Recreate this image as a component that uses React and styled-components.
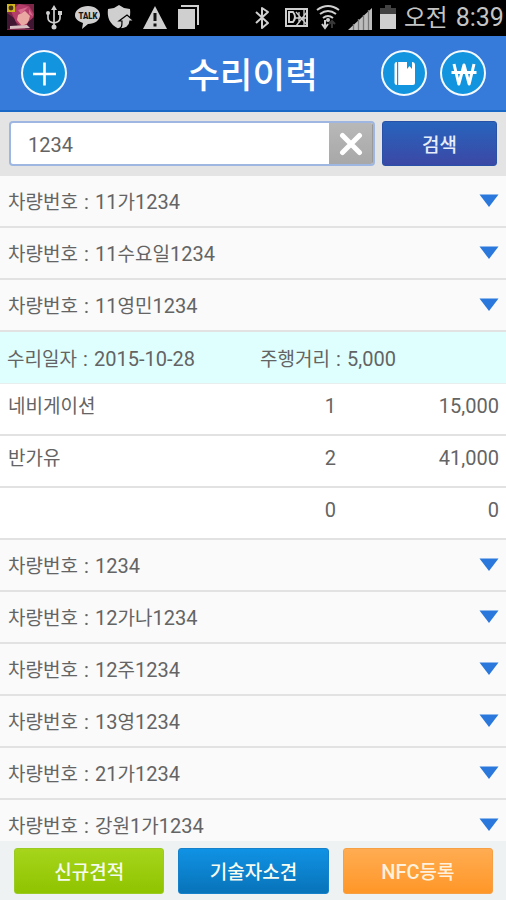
import React from 'react';
import styled, { createGlobalStyle } from 'styled-components';

const GlobalStyle = createGlobalStyle`
  * { box-sizing: border-box; }
  html, body { margin: 0; padding: 0; background: #fff; overflow: hidden; }
  svg { display: block; flex: none; }
`;

const Screen = styled.div`
  width: 506px;
  height: 900px;
  display: flex;
  flex-direction: column;
  overflow: hidden;
  background: #fff;
  color: #646464;
  font: 400 20px/26px Roboto, 'Noto Sans CJK KR', sans-serif;
`;

const Hangul = styled.span`
  font-family: 'Noto Sans CJK KR', sans-serif;
  font-size: 0.95em;
  line-height: 1;
`;

const Text = ({ children }) =>
  children
    .split(/([가-힣]+)/)
    .filter(Boolean)
    .map((run, i) => (/[가-힣]/.test(run) ? <Hangul key={i}>{run}</Hangul> : run));

const StatusBar = styled.div`
  height: 36px;
  flex: none;
  display: flex;
  align-items: center;
  background: #000;
  color: #c4c4c4;
`;

const StatusIcons = styled.svg`
  width: 404px;
  height: 36px;
`;

const Clock = styled.div`
  display: flex;
  gap: 8px;
  white-space: nowrap;
  font-size: 25px;
  line-height: 36px;
`;

const Header = styled.header`
  height: 76px;
  flex: none;
  display: grid;
  grid-template-columns: 105px 1fr 105px;
  align-items: center;
  padding: 0 20px 0 21px;
  background: #377bda;
  border-bottom: 2px solid #1a69c6;
`;

const Title = styled.h1`
  margin: 0 2px 0 0;
  text-align: center;
  color: #fff;
  font: 500 35.5px/40px 'Noto Sans CJK KR', sans-serif;
`;

const Actions = styled.div`
  display: flex;
  gap: 13px;
`;

const RoundButton = styled.button`
  width: 46px;
  height: 46px;
  padding: 0;
  display: grid;
  place-items: center;
  border: 2px solid #f4faff;
  border-radius: 50%;
  background: #1295de;
`;

const SearchBar = styled.div`
  height: 64px;
  flex: none;
  display: flex;
  gap: 7px;
  padding: 9px 9px 10px;
  background: #e3e4e3;
`;

const SearchField = styled.div`
  width: 366px;
  display: flex;
  overflow: hidden;
  border: 2px solid #9eb6e2;
  border-radius: 4px;
  background: #fff;
`;

const Query = styled.div`
  flex: 1;
  padding: 9px 0 0 17px;
  font-size: 20px;
  line-height: 26px;
`;

const ClearButton = styled.button`
  width: 44px;
  padding: 0;
  display: grid;
  place-items: center;
  border: 0;
  border-right: 1px solid #999;
  background: linear-gradient(#b8b8b8, #a8a8a8);
`;

const SearchButton = styled.button`
  width: 115px;
  height: 45px;
  padding: 0;
  border: 1px solid #2a51a8;
  border-radius: 3px;
  background: linear-gradient(#2864bd, #3b48a5);
  color: #e6edfb;
  font: 500 19px/26px 'Noto Sans CJK KR', sans-serif;
`;

const List = styled.main`
  height: 665px;
  flex: none;
  overflow: hidden;
  word-spacing: 1.2px;
`;

const VehicleRow = styled.div`
  height: 52px;
  display: flex;
  justify-content: space-between;
  padding: 13px 7px 0 8px;
  background: #fafafa;
  border-bottom: 2px solid #e2e2e2;
`;

const Arrow = styled.svg`
  width: 20px;
  height: 14px;
  margin-top: 5px;
`;

const VisitRow = styled.div`
  height: 52px;
  display: grid;
  grid-template-columns: 253px 1fr;
  padding: 14px 8px 0 7px;
  background: #dfffff;
  border-bottom: 1px solid #e8eeee;
`;

const PartRow = styled.div`
  height: 52px;
  display: grid;
  grid-template-columns: 1fr 60px 163px;
  padding: 9px 7px 0 8px;
  background: #fff;
  border-bottom: 2px solid #e2e2e2;
  text-align: right;
`;

const PartName = styled.span`
  text-align: left;
`;

const Footer = styled.footer`
  height: 59px;
  flex: none;
  display: flex;
  gap: 14px;
  padding: 7px 13px 0 14px;
  background: #eff2f2;
`;

const tones = {
  green: ['#a6d51b', '#8fc400', '#9acb25'],
  blue: ['#1092e4', '#0873b9', '#1581ca'],
  orange: ['#ffac52', '#ff9728', '#f5a044'],
};

const FooterButton = styled.button`
  width: 151px;
  height: 46px;
  padding: 1px 0 0;
  border: 1px solid ${(p) => tones[p.$tone][2]};
  border-radius: 3px;
  background: linear-gradient(${(p) => tones[p.$tone][0]}, ${(p) => tones[p.$tone][1]});
  color: ${(p) => (p.$tone === 'orange' ? '#fff1dc' : '#f6fbf0')};
  font: 500 20px/26px Roboto, 'Noto Sans CJK KR', sans-serif;
`;

const vehiclesBefore = ['11가1234', '11수요일1234', '11영민1234'];
const vehiclesAfter = ['1234', '12가나1234', '12주1234', '13영1234', '21가1234', '강원1가1234'];
const parts = [
  ['네비게이션', '1', '15,000'],
  ['반가유', '2', '41,000'],
  ['', '0', '0'],
];

const Vehicle = ({ number }) => (
  <VehicleRow>
    <span><Text>{`차량번호 : ${number}`}</Text></span>
    <Arrow viewBox="0 0 20 14"><path d="M.5.5h19L10 13z" fill="#2a78dc" /></Arrow>
  </VehicleRow>
);

const StatusGlyphs = () => (
  <StatusIcons viewBox="0 0 404 36" fill="none" stroke="#cfcfcf">
    <g stroke="none">
      <rect x="7" y="4" width="27" height="26" fill="#7d2748" />
      <path d="M11 11l8-7 10 2 5 8-3 9-8 5-8-7z" fill="#b43c69" />
      <path d="M18 15l7-4 5 5-2 7-6 3-5-6z" fill="#e9a8a2" />
      <path d="M7 13l7 5 4 9-11 2zM28 22l6-5v12h-9z" fill="#401633" />
      <path d="M18 10l10-3-7 7zM29 9l4 7-4-2z" fill="#d76b8e" />
      <rect x="7" y="4" width="8" height="8" fill="#d0b521" />
      <circle cx="11" cy="8" r="2.4" fill="#493213" />
      <path d="M10 26l17-1 3 3-20 1z" fill="#d7bec1" />
    </g>
    <g strokeWidth="1.7">
      <path d="M54 8v18M54 23q-6-1-6-5v-4M54 23q6-1 6-5v-5" />
      <g fill="#cfcfcf" stroke="none">
        <path d="M54 5l3 5h-6z" /><circle cx="48" cy="13" r="2" /><rect x="58" y="11" width="4" height="4" /><circle cx="54" cy="27" r="2.5" />
      </g>
    </g>
    <path d="M88 6c7 0 12 4 12 9s-5 9-12 9l-6 5 1-6c-5-2-8-4-8-8 0-5 6-9 13-9z" fill="#cfcfcf" stroke="none" />
    <text x="88" y="18.5" textAnchor="middle" textLength="19" lengthAdjust="spacingAndGlyphs" fill="#161616" stroke="none" fontFamily="Roboto, sans-serif" fontWeight="900" fontSize="8.5">TALK</text>
    <path d="M119 5l5 3 6 1c1 8-1 15-11 20-10-5-12-12-11-20l6-1z" fill="#cfcfcf" stroke="none" />
    <path d="M118 29c4-1 4-3 4-8h-3l8-6 7 6h-4c0 5-4 8-12 8z" fill="#cfcfcf" stroke="#000" strokeWidth="1.2" />
    <path d="M155 6l12 23h-24z" fill="#cfcfcf" stroke="none" />
    <path d="M155 13v8M155 23.500v3" stroke="#111" strokeWidth="3" />
    <path d="M178 9h17v20h-17z" fill="#cfcfcf" stroke="none" />
    <path d="M181 6h17v19" strokeWidth="2" />
    <path d="M256 12l12 11-6 5V8l6 4-12 11" strokeWidth="2" strokeLinejoin="round" />
    <rect x="286" y="9" width="21" height="17" strokeWidth="2" />
    <path d="M289 12h4q4 5 0 10h-4z" strokeWidth="2" />
    <path d="M296 12l11 13M307 12l-11 14M299 12v11M304 10v17M295 18h13" strokeWidth="1.3" />
    <path d="M317 10q11-8 22 0M320 14q8-6 16 0M323 18q5-4 10 0" strokeWidth="2" />
    <circle cx="328" cy="20" r="2" fill="#cfcfcf" stroke="none" />
    <path d="M325 20v7m-3-3 3 4 3-4" strokeWidth="2" />
    <path d="M332 28v-6m-3 2 3-3 3 3" stroke="#383838" strokeWidth="2" />
    <path d="M348 30l24-22v22z" fill="#bdbdbd" stroke="none" />
    <path d="M353.500 24v6M358.500 19v11M363.500 15v15M368.500 10v20" stroke="#777" strokeWidth="1.300" />
    <path d="M380 8h5V5h6v3h5v7h-16z" fill="#424242" stroke="none" />
    <path d="M380 14h16v15h-16z" fill="#cfcfcf" stroke="none" />
  </StatusIcons>
);

export default function App() {
  return (
    <Screen>
      <GlobalStyle />
      <StatusBar>
        <StatusGlyphs />
        <Clock><span><Text>오전</Text></span><span>8:39</span></Clock>
      </StatusBar>
      <Header>
        <RoundButton aria-label="추가">
          <svg width="42" height="42" viewBox="0 0 42 42"><path d="M10 22h23M21.500 10.500v23" stroke="#fff" strokeWidth="2.6" /></svg>
        </RoundButton>
        <Title>수리이력</Title>
        <Actions>
          <RoundButton aria-label="장부">
            <svg width="42" height="42" viewBox="0 0 42 42"><path d="M11.500 12q0-2 2.500-2v23q-2.500 0-2.500-2zM15.200 10H24v7l2.500-3 2.500 3v-7q3 0 3 3v18q0 2-2 2H15.200z" fill="#fff" /></svg>
          </RoundButton>
          <RoundButton aria-label="금액">
            <svg width="42" height="42" viewBox="0 0 42 42"><path d="M12 12l4.800 20 5.200-19 5.200 19 4.800-20M9.500 20.500h25" stroke="#fff" strokeWidth="3" fill="none" strokeLinejoin="round" /></svg>
          </RoundButton>
        </Actions>
      </Header>
      <SearchBar>
        <SearchField>
          <Query>1234</Query>
          <ClearButton aria-label="지우기">
            <svg width="24" height="24" viewBox="0 0 24 24"><path d="M3.500 3.500l17 17m0-17l-17 17" stroke="#fff" strokeWidth="5" strokeLinecap="round" /></svg>
          </ClearButton>
        </SearchField>
        <SearchButton>검색</SearchButton>
      </SearchBar>
      <List>
        {vehiclesBefore.map((n) => <Vehicle key={n} number={n} />)}
        <VisitRow>
          <span><Text>수리일자 : 2015-10-28</Text></span>
          <span><Text>주행거리 : 5,000</Text></span>
        </VisitRow>
        {parts.map(([name, count, price]) => (
          <PartRow key={price}>
            <PartName><Text>{name}</Text></PartName>
            <span>{count}</span>
            <span>{price}</span>
          </PartRow>
        ))}
        {vehiclesAfter.map((n) => <Vehicle key={n} number={n} />)}
      </List>
      <Footer>
        <FooterButton $tone="green"><Text>신규견적</Text></FooterButton>
        <FooterButton $tone="blue"><Text>기술자소견</Text></FooterButton>
        <FooterButton $tone="orange"><Text>NFC등록</Text></FooterButton>
      </Footer>
    </Screen>
  );
}
